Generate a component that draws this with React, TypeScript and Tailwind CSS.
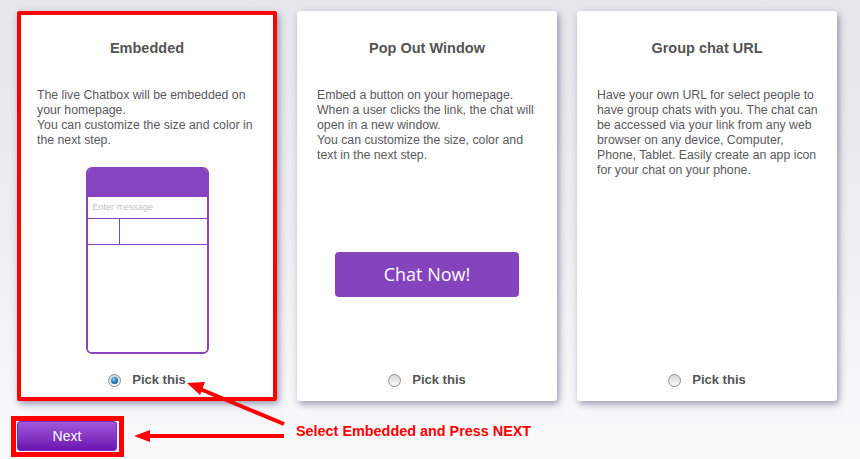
import React from "react";

const OPTIONS = [
  {
    title: "Embedded",
    lines: [
      "The live Chatbox will be embedded on",
      "your homepage.",
      "You can customize the size and color in",
      "the next step.",
    ],
    kind: "embed",
    checked: true,
  },
  {
    title: "Pop Out Window",
    lines: [
      "Embed a button on your homepage.",
      "When a user clicks the link, the chat will",
      "open in a new window.",
      "You can customize the size, color and",
      "text in the next step.",
    ],
    kind: "popout",
    checked: false,
  },
  {
    title: "Group chat URL",
    lines: [
      "Have your own URL for select people to",
      "have group chats with you. The chat can",
      "be accessed via your link from any web",
      "browser on any device, Computer,",
      "Phone, Tablet. Easily create an app icon",
      "for your chat on your phone.",
    ],
    kind: "url",
    checked: false,
  },
];

function Radio({ checked }: { checked: boolean }) {
  return (
    <span className="flex h-[13px] w-[13px] items-center justify-center rounded-full border border-[#8f9092] bg-gradient-to-b from-[#d4d4d4] to-[#fbfbfb]">
      {checked && (
        <span className="h-[7px] w-[7px] rounded-full bg-[radial-gradient(circle_at_40%_35%,#8fd0ff_0%,#2a7fc4_45%,#0d3f70_100%)]" />
      )}
    </span>
  );
}

function ChatPreview() {
  return (
    <div className="mx-auto mt-[19px] flex h-[187px] w-[123px] flex-col overflow-hidden rounded-[6px] border-2 border-[#8644c0]">
      <div className="h-[28px] bg-[#8644c0]" />
      <div className="flex h-[22px] items-center border-b-[1.5px] border-[#8644c0] pl-[5px] text-[9px] text-[#c4c4c4]">
        Enter message
      </div>
      <div className="flex h-[26px] border-b-[1.5px] border-[#8644c0]">
        <div className="w-[32px] border-r-[1.5px] border-[#8644c0]" />
        <div className="flex-1" />
      </div>
      <div className="flex-1 bg-white" />
    </div>
  );
}

function Card({ option }: { option: (typeof OPTIONS)[number] }) {
  return (
    <div
      className={
        option.checked
          ? "flex h-[390px] w-[260px] flex-col rounded-[2px] bg-white px-[20px] shadow-[2px_3px_7px_rgba(60,60,105,0.5)] ring-4 ring-inset ring-[#ff0000]"
          : "flex h-[390px] w-[260px] flex-col rounded-[3px] bg-white px-[20px] shadow-[2px_3px_7px_rgba(60,60,105,0.5)]"
      }
    >
      <h2 className="mt-[27px] text-center text-[14.5px] font-bold leading-[20px] text-[#545454]">
        {option.title}
      </h2>
      <div className="mt-[30px] text-[12.3px] leading-[15px] text-[#59595e]">
        {option.lines.map((line, i) => (
          <p key={i} className="whitespace-nowrap">
            {line}
          </p>
        ))}
      </div>

      {option.kind === "embed" && <ChatPreview />}
      {option.kind === "popout" && (
        <button className="mx-auto mt-[89px] flex h-[45px] w-[184px] items-center justify-center rounded-[4px] bg-[#8543bd] font-['Open_Sans',sans-serif] text-[18px] text-white">
          Chat Now!
        </button>
      )}

      <label className="mt-auto mb-[11px] flex h-[20px] items-center justify-center gap-[11px]">
        <Radio checked={option.checked} />
        <span className="text-[13px] font-bold text-[#555]">Pick this</span>
      </label>
    </div>
  );
}

export default function App() {
  return (
    <div className="relative h-[459px] w-[860px] overflow-hidden bg-gradient-to-b from-[#e6e6eb] via-[#eeeef1] to-[#fafafb] font-['Liberation_Sans',Arial,sans-serif]">
      <div className="flex gap-[20px] pl-[17px] pt-[11px]">
        {OPTIONS.map((option) => (
          <Card key={option.title} option={option} />
        ))}
      </div>

      <div className="mt-[15px] flex items-start pl-[11px]">
        <div className="border-[5px] border-[#ff0000] pb-[1px] pl-[1px] pr-[2px]">
          <button className="flex h-[30px] w-[100px] items-center justify-center rounded-[3px] border border-[#7a2cc0] bg-gradient-to-b from-[#a257dc] to-[#6b0fae] text-[14px] font-normal text-white">
            Next
          </button>
        </div>
        <p className="ml-[172px] mt-[6px] text-[14.4px] font-bold leading-[18px] text-[#ff0000]">
          Select Embedded and Press NEXT
        </p>
      </div>

      {/* annotation arrows */}
      <svg className="pointer-events-none absolute left-0 top-0" width="860" height="459">
        <line x1="284" y1="436" x2="148" y2="436" stroke="#ff0000" strokeWidth="4" />
        <polygon points="134,436 150,430 150,442" fill="#ff0000" />
        <line x1="284" y1="424" x2="200" y2="389" stroke="#ff0000" strokeWidth="4" />
        <polygon points="187,383 205,382 200,395" fill="#ff0000" />
      </svg>
    </div>
  );
}
